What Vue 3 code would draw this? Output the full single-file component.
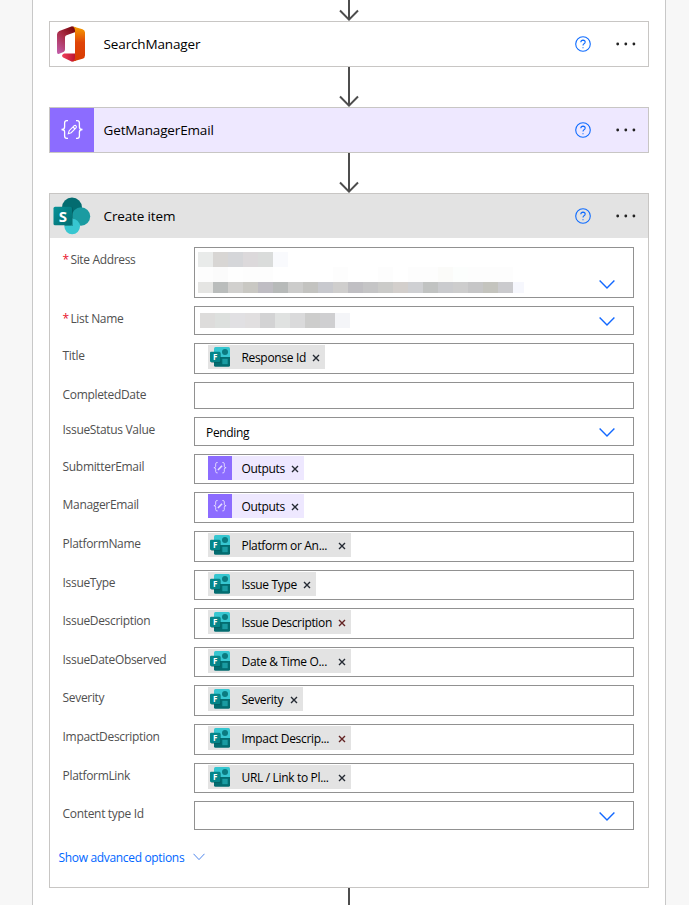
<script setup>
const steps = [
  { name: 'SearchManager', kind: 'office' },
  { name: 'GetManagerEmail', kind: 'compose' },
]

const siteTop = ['#e9ebea', '#d8d6d4', '#d5d6d9', '#dcd9db', '#dadcdb', '#f9fafd']
const siteMid = ['#fdfdfd', '#fbfbfb', '#fefefe', '#fdfdfd', '#fdfdfd', '#fff', '#fff', '#fff', '#fff', '#fdfdfd', '#fff', '#fff', '#fdfdfd', '#fff', '#fdfdfd', '#fdfdfd', '#fbfbf9', '#fcfefd', '#fdfdfd', '#fdfdfd', '#fdfdfd']
const siteLow = ['#e5e5e3', '#babdbc', '#d1d0ce', '#c9c8c3', '#bfbdc3', '#b7bab9', '#cccccb', '#c3c3c0', '#c8c9ce', '#cfcecd', '#c0bfc3', '#c5c5c6', '#cbcbc9', '#d3cfcc', '#cfd0d3', '#c1c3c2', '#cacbce', '#cdcdcd', '#c6c6c7', '#c4c4be', '#cbcbce', '#f6f7fd']
const listRow = ['#dddcdb', '#dde0de', '#e1e0e3', '#e1dfe0', '#d3d3d4', '#e0e2e1', '#dadadb', '#cdcdcc', '#cfcfd1', '#f4f5f8']

const fields = [
  { label: 'Site Address', required: true, height: 51, drop: true, masks: [siteTop, siteMid, siteLow], mask: 'site' },
  { label: 'List Name', required: true, height: 29, drop: true, masks: [listRow], mask: 'list' },
  { label: 'Title', height: 31, token: 'Response Id', width: 117 },
  { label: 'CompletedDate', height: 27 },
  { label: 'IssueStatus Value', height: 29, drop: true, value: 'Pending' },
  { label: 'SubmitterEmail', height: 30, token: 'Outputs', width: 96, compose: true },
  { label: 'ManagerEmail', height: 31, token: 'Outputs', width: 96, compose: true },
  { label: 'PlatformName', height: 31, token: 'Platform or An...', width: 143 },
  { label: 'IssueType', height: 30, token: 'Issue Type', width: 108 },
  { label: 'IssueDescription', height: 31, token: 'Issue Description', width: 143, invalid: true },
  { label: 'IssueDateObserved', height: 30, token: 'Date & Time O...', width: 143 },
  { label: 'Severity', height: 31, token: 'Severity', width: 95 },
  { label: 'ImpactDescription', height: 31, token: 'Impact Descrip...', width: 143, invalid: true },
  { label: 'PlatformLink', height: 30, token: 'URL / Link to Pl...', width: 143 },
  { label: 'Content type Id', height: 29, drop: true },
]
</script>

<template>
  <main class="canvas">
    <section class="scope">
      <svg class="arrow first" width="20" height="21" viewBox="0 19 20 21"><path d="M10 0V38M1 29.5L10 38.6L19 29.5" /></svg>

      <template v-for="step in steps" :key="step.name">
        <article class="step" :class="step.kind">
          <div class="brand">
            <svg v-if="step.kind === 'office'" class="office-logo" width="28" height="36" viewBox="0 0 28 36">
              <defs>
                <linearGradient id="offLeft" x1="0.7" y1="0" x2="0.1" y2="1"><stop offset="0" stop-color="#7d0a12" /><stop offset=".4" stop-color="#a92c45" /><stop offset="1" stop-color="#c15ca8" /></linearGradient>
                <linearGradient id="offRight" x1="0" y1="0" x2="0" y2="1"><stop offset="0" stop-color="#f8a000" /><stop offset=".45" stop-color="#df4508" /><stop offset="1" stop-color="#d83b01" /></linearGradient>
                <linearGradient id="offBottom" x1="0" y1="0" x2="1" y2="0"><stop offset="0" stop-color="#f0405c" /><stop offset="1" stop-color="#b8102c" /></linearGradient>
              </defs>
              <path d="M15 .3L2.300 5Q0 6 0 8.500V26Q0 28.500 2.200 27.700L6.500 26Q8 25.300 8 23.500V11.500Q8 9.800 9.500 9.200L18.500 6V1.300Z" fill="url(#offLeft)" />
              <path d="M7 27.600H19V34.500L15 35.700L6.200 31.500Q3.500 29.500 7 27.600Z" fill="url(#offBottom)" />
              <path d="M16 .5L25.500 3.200Q28 4 28 6.500V29.500Q28 32 25.500 32.700L15 35.700Q18 34.500 18 31.500V4.500Q18 1.800 16 .5Z" fill="url(#offRight)" />
            </svg>
            <svg v-else width="24" height="22" viewBox="0 0 24 22" class="braces">
              <path d="M8 1.600H6.800Q4.600 1.600 4.600 4V8Q4.600 10.500 1.500 10.500Q4.600 10.500 4.600 13V17Q4.600 19.400 6.800 19.400H8M16 1.600H17.200Q19.400 1.600 19.400 4V8Q19.400 10.500 22.500 10.500Q19.400 10.500 19.400 13V17Q19.400 19.400 17.200 19.400H16" />
              <path class="pencil" d="M8.300 14.700L9.200 11.700L14.200 6.700Q15.400 6 16.100 7Q16.800 8 16 8.800L11.200 13.700ZM13 8L15 10" />
            </svg>
          </div>
          <h2>{{ step.name }}</h2>
          <svg class="help" width="16" height="16" viewBox="0 0 16 16"><circle cx="8" cy="8" r="7.300" /><path d="M5.800 6.200Q5.900 4.100 8 4.100Q10.200 4.200 10.200 6Q10.200 7 9 7.700Q8 8.300 8 9.500M8 11.200V12.300" /></svg>
          <svg class="dots" width="20" height="4" viewBox="0 0 20 4"><circle cx="1.700" cy="2" r="1.400" /><circle cx="9.800" cy="2" r="1.400" /><circle cx="17.900" cy="2" r="1.400" /></svg>
        </article>
        <svg class="arrow" width="20" height="40" viewBox="0 0 20 40"><path d="M10 0V38M1 29.500L10 38.600L19 29.500" /></svg>
      </template>

      <article class="panel">
        <header class="step share">
          <div class="brand">
            <svg width="38" height="38" viewBox="0 0 38 38">
              <defs><linearGradient id="spTile" x1="0" y1="0" x2="1" y2="1"><stop offset="0" stop-color="#079298" /><stop offset="1" stop-color="#026d70" /></linearGradient></defs>
              <circle cx="19" cy="10.500" r="10" fill="#036c70" />
              <circle cx="28" cy="19.500" r="9.200" fill="#1a9ba1" />
              <circle cx="19.200" cy="29.500" r="7.800" fill="#37c6d0" />
              <path d="M11 9.800H18Q20 9.800 20 12V29H11.500Z" fill="#024f53" opacity=".4" />
              <rect x=".500" y="9.800" width="18.500" height="18.500" rx="1.600" fill="url(#spTile)" />
              <text x="9.800" y="24.500" text-anchor="middle">S</text>
            </svg>
          </div>
          <h2>Create item</h2>
          <svg class="help" width="16" height="16" viewBox="0 0 16 16"><circle cx="8" cy="8" r="7.300" /><path d="M5.800 6.200Q5.900 4.100 8 4.100Q10.200 4.200 10.200 6Q10.200 7 9 7.700Q8 8.300 8 9.500M8 11.200V12.300" /></svg>
          <svg class="dots" width="20" height="4" viewBox="0 0 20 4"><circle cx="1.700" cy="2" r="1.400" /><circle cx="9.800" cy="2" r="1.400" /><circle cx="17.900" cy="2" r="1.400" /></svg>
        </header>

        <div class="fields">
          <div v-for="f in fields" :key="f.label" class="field" :style="{ height: f.height + 'px' }">
            <label><b v-if="f.required">*</b>{{ f.label }}</label>
            <div class="box">
              <div v-if="f.masks" class="masks" :class="f.mask">
                <div v-for="(row, r) in f.masks" :key="r" class="mask-row">
                  <i v-for="(c, n) in row" :key="n" :style="{ background: c }"></i>
                </div>
              </div>
              <span v-if="f.value" class="value">{{ f.value }}</span>
              <div v-if="f.token" class="token" :class="{ violet: f.compose }" :style="{ width: f.width + 'px' }">
                <div v-if="f.compose" class="token-icon">
                  <svg width="14" height="14" viewBox="0 0 24 22" class="braces small">
                    <path d="M8 1.600H6.800Q4.600 1.600 4.600 4V8Q4.600 10.500 1.500 10.500Q4.600 10.500 4.600 13V17Q4.600 19.400 6.800 19.400H8M16 1.600H17.200Q19.400 1.600 19.400 4V8Q19.400 10.500 22.500 10.500Q19.400 10.500 19.400 13V17Q19.400 19.400 17.200 19.400H16" />
                    <path class="pencil" d="M8.500 14.500L15.500 7" />
                  </svg>
                </div>
                <div v-else class="token-icon">
                  <svg width="24" height="24" viewBox="0 0 24 24">
                    <path d="M7.500 2H20.500Q22 2 22 3.500V12H6V3.500Q6 2 7.500 2Z" fill="#37c6d0" />
                    <path d="M6 12H22V20.300Q22 21.800 20.500 21.800H7.500Q6 21.800 6 20.300Z" fill="#036c70" />
                    <circle cx="17" cy="7" r="3" fill="#0b7b80" />
                    <rect x="14.300" y="13.800" width="5.400" height="5.400" fill="#1a9ba1" />
                    <rect x="3" y="7.500" width="10" height="10.500" rx="1" fill="#03585c" opacity=".45" />
                    <rect x="2" y="6.700" width="10.200" height="10.200" rx="1" fill="#058589" />
                    <text x="7.100" y="14.600" text-anchor="middle">F</text>
                  </svg>
                </div>
                <span>{{ f.token }}</span>
                <svg class="close" :class="{ invalid: f.invalid }" width="8" height="8" viewBox="0 0 8 8"><path d="M1 1L7 7M7 1L1 7" /></svg>
              </div>
              <svg v-if="f.drop" class="chevron" width="16" height="10" viewBox="0 0 16 10"><path d="M.600 1.500L8 9L15.400 1.500" /></svg>
            </div>
          </div>
        </div>

        <a class="advanced">Show advanced options
          <svg width="12" height="8" viewBox="0 0 12 8"><path d="M.500 .800L6 6.600L11.500 .800" /></svg>
        </a>
      </article>
      <div class="tail"></div>
    </section>
  </main>
</template>

<style>
body { background: #f7f7f7; overflow: hidden; }
</style>

<style scoped>
* { box-sizing: border-box; }
.canvas { height: 905px; overflow: hidden; padding-left: 32px; font-family: "Open Sans", "Noto Sans", sans-serif; font-size: 12px; letter-spacing: -.33px; }
.scope { width: 634px; height: 905px; border: solid #c8c8c8; border-width: 0 1px; background: #fff; padding: 0 16px; display: flex; flex-direction: column; align-items: flex-start; }
.arrow { display: block; flex: none; margin-left: 290px; }
.arrow path { fill: none; stroke: #4d4d4d; stroke-width: 2; }
.arrow.first { overflow: hidden; }
.step { width: 600px; height: 46px; flex: none; display: flex; align-items: center; border: 1px solid #c8c6c4; }
.brand { width: 44px; height: 44px; flex: none; display: flex; align-items: center; justify-content: center; }
.compose { background: #eee8ff; }
.compose .brand { background: #8c6cff; }
.braces path { fill: none; stroke: #fff; stroke-width: 1.3; }
.braces .pencil { stroke-width: 1.1; }
.braces.small path { stroke-width: 1.5; stroke: #e8e0ff; }
.braces.small .pencil { stroke-width: 2.6; }
.office-logo { margin-right: 2px; }
h2 { margin: 0 auto 0 9.6px; font-size: 13.5px; font-weight: 400; letter-spacing: -.15px; color: #000; }
.help { margin-right: 25px; }
.help circle, .help path { fill: none; stroke: #0f6cff; stroke-width: 1.100; }
.dots { margin-right: 12px; fill: #222; }
.panel { width: 600px; height: 695px; flex: none; border: 1px solid #c8c6c4; display: flex; flex-direction: column; }
.share { width: 598px; height: 44px; border: 0; background: #e3e3e3; }
.share text { fill: #fff; font: 700 15px "Open Sans", sans-serif; }
.fields { display: flex; flex-direction: column; gap: 8px; padding: 9px 14px 0 12px; }
.field { display: flex; }
label { width: 132px; line-height: 17px; padding: 4px 0 0 .6px; color: #505050; white-space: nowrap; }
label b { color: #e8112b; font-weight: 400; margin-right: 1.5px; }
.box { width: 440px; border: 1px solid #919191; display: flex; align-items: flex-start; }
.value { margin: 6px 0 0 11px; line-height: 17px; color: #000; }
.token { margin: 1px 0 0 13px; height: 24px; display: flex; align-items: center; background: #e3e3e3; padding-right: 5px; color: #000; }
.token.violet { background: #eee8ff; }
.token-icon { width: 24px; height: 24px; flex: none; display: flex; align-items: center; justify-content: center; }
.violet .token-icon { background: #8c6cff; }
.token-icon text { fill: #fff; font: 700 8px "Open Sans", sans-serif; }
.token span { margin: 0 auto 0 9.5px; white-space: nowrap; }
.close { flex: none; margin-top: 2px; }
.close path { stroke: #252a33; stroke-width: 1.400; fill: none; }
.close.invalid path { stroke: #632323; }
.chevron { margin: auto 18px 8px auto; }
.chevron path { fill: none; stroke: #1268ff; stroke-width: 1.400; }
.masks { display: flex; flex-direction: column; }
.site { margin: 4px 0 0 3px; }
.list { margin: 6px 0 0 5px; }
.mask-row { display: flex; height: 15px; }
.mask-row i { width: 15px; }
.site .mask-row:last-child { height: 11px; }
.site .mask-row:last-child i:last-child { width: 11px; }
.advanced { display: flex; align-items: center; margin: 18px 0 0 8.5px; height: 18px; color: #0066ff; white-space: nowrap; }
.advanced svg { margin-left: 9px; }
.advanced path { fill: none; stroke: #4f86ec; stroke-width: 1; }
.tail { width: 2px; height: 17px; margin-left: 299px; background: #4d4d4d; }
</style>
